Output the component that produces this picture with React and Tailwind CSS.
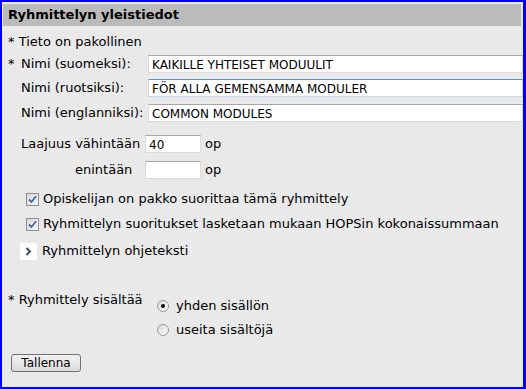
import React from "react"

function Check() {
  return (
    <span className="w-[13px] h-[13px] border border-[#8e8f8f] bg-gradient-to-br from-[#d8d8d8] to-[#f6f6f6] flex items-center justify-center shrink-0">
      <svg width="9" height="9" viewBox="0 0 9 9">
        <path d="M1 4.5 L3.5 7 L8 1.2" stroke="#4d61a0" strokeWidth="1.8" fill="none" />
      </svg>
    </span>
  )
}

function Radio({ on }) {
  return (
    <span className="w-[12px] h-[12px] rounded-full border border-[#9a9a9a] bg-gradient-to-br from-[#d6d6d6] to-white flex items-center justify-center shrink-0">
      {on && <span className="w-[4px] h-[4px] rounded-full bg-black" />}
    </span>
  )
}

export default function App() {
  const input = "h-[18px] bg-white border border-[#dcdcdc] border-t-[#a7a7a7] pl-[3px] pt-[1px] text-[12px] flex items-center text-black"
  return (
    <div className="w-[526px] h-[389px] border-l-2 border-t-2 border-b-2 border-r-[3px] border-[#0000ff] bg-[#e9e9e9] pt-[2px] pl-[1px] overflow-hidden font-['DejaVu_Sans',sans-serif] text-[13px] text-black">
      <div className="h-[22px] bg-[#bbbbbb] pl-[5px] mr-[2px] flex items-center font-bold">Ryhmittelyn yleistiedot</div>

      <div className="pl-[5px]">
        <div className="mt-[6px] h-[20px] flex items-center">* Tieto on pakollinen</div>

        {/* nimet */}
        <div className="mt-[3px] h-[18px] flex items-center">
          <span className="w-[13px]">*</span>
          <span className="w-[127px]">Nimi (suomeksi):</span>
          <div className={input + " flex-1"}>KAIKILLE YHTEISET MODUULIT</div>
        </div>
        <div className="mt-[6px] h-[18px] flex items-center">
          <span className="w-[13px]"></span>
          <span className="w-[127px]">Nimi (ruotsiksi):</span>
          <div className="h-[18px] flex-1 bg-white border border-[#c5daed] border-t-[#5794bf] pl-[3px] pt-[1px] text-[12px] flex items-center">FÖR ALLA GEMENSAMMA MODULER</div>
        </div>
        <div className="mt-[7px] h-[18px] flex items-center">
          <span className="w-[13px]"></span>
          <span className="w-[127px]">Nimi (englanniksi):</span>
          <div className={input + " flex-1"}>COMMON MODULES</div>
        </div>

        {/* laajuus */}
        <div className="mt-[13px] h-[18px] flex items-center pl-[13px]">
          <span className="w-[124px]">Laajuus vähintään</span>
          <div className={input + " w-[56px]"}>40</div>
          <span className="ml-[4px]">op</span>
        </div>
        <div className="mt-[8px] h-[18px] flex items-center pl-[67px]">
          <span className="w-[70px]">enintään</span>
          <div className={input + " w-[56px]"}></div>
          <span className="ml-[4px]">op</span>
        </div>

        {/* valinnat */}
        <div className="mt-[10px] h-[20px] flex items-center pl-[18px] gap-[4px]">
          <Check />
          <span>Opiskelijan on pakko suorittaa tämä ryhmittely</span>
        </div>
        <div className="mt-[5px] h-[20px] flex items-center pl-[18px] gap-[4px]">
          <Check />
          <span>Ryhmittelyn suoritukset lasketaan mukaan HOPSin kokonaissummaan</span>
        </div>
        <div className="mt-[8px] h-[18px] flex items-center pl-[12px]">
          <span className="w-[17px] h-[17px] bg-white flex items-center justify-center">
            <svg width="7" height="9" viewBox="0 0 7 9">
              <path d="M1.5 1 L5 4.5 L1.5 8" stroke="#3b4a6b" strokeWidth="2" fill="none" />
            </svg>
          </span>
          <span className="ml-[5px]">Ryhmittelyn ohjeteksti</span>
        </div>

        {/* sisältö */}
        <div className="mt-[37px] flex">
          <span className="w-[149px] -mt-[7px]">* Ryhmittely sisältää</span>
          <div className="flex flex-col gap-[6px]">
            <div className="h-[18px] flex items-center gap-[7px]">
              <Radio on />
              <span>yhden sisällön</span>
            </div>
            <div className="h-[18px] flex items-center gap-[7px]">
              <Radio />
              <span>useita sisältöjä</span>
            </div>
          </div>
        </div>

        <button className="mt-[15px] ml-[3px] w-[70px] h-[18px] border border-[#707070] rounded-[3px] bg-gradient-to-b from-[#f2f2f2] to-[#dcdcdc] text-[12px] flex items-center justify-center">Tallenna</button>
      </div>
    </div>
  )
}
